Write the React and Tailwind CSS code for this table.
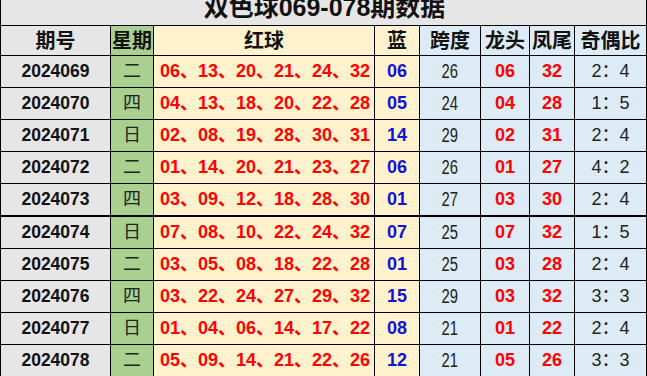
import React from 'react';

const rows = [
    { id: '2024069', wd: '二', red: '06、13、20、21、24、32', blue: '06', span: '26', head: '06', tail: '32', ratio: '2：4' },
    { id: '2024070', wd: '四', red: '04、13、18、20、22、28', blue: '05', span: '24', head: '04', tail: '28', ratio: '1：5' },
    { id: '2024071', wd: '日', red: '02、08、19、28、30、31', blue: '14', span: '29', head: '02', tail: '31', ratio: '2：4' },
    { id: '2024072', wd: '二', red: '01、14、20、21、23、27', blue: '06', span: '26', head: '01', tail: '27', ratio: '4：2' },
    { id: '2024073', wd: '四', red: '03、09、12、18、28、30', blue: '01', span: '27', head: '03', tail: '30', ratio: '2：4' },
    { id: '2024074', wd: '日', red: '07、08、10、22、24、32', blue: '07', span: '25', head: '07', tail: '32', ratio: '1：5' },
    { id: '2024075', wd: '二', red: '03、05、08、18、22、28', blue: '01', span: '25', head: '03', tail: '28', ratio: '2：4' },
    { id: '2024076', wd: '四', red: '03、22、24、27、29、32', blue: '15', span: '29', head: '03', tail: '32', ratio: '3：3' },
    { id: '2024077', wd: '日', red: '01、04、06、14、17、22', blue: '08', span: '21', head: '01', tail: '22', ratio: '2：4' },
    { id: '2024078', wd: '二', red: '05、09、14、21、22、26', blue: '12', span: '21', head: '05', tail: '26', ratio: '3：3' },
];

const font = { fontFamily: '"Liberation Sans", "Noto Sans CJK SC", sans-serif' };

const cell = 'flex items-center justify-center border-r border-black whitespace-nowrap overflow-hidden';

const App = () => {
    return (
        <div className="w-[647px] h-[376px] overflow-hidden bg-white" style={font}>
            {/* title */}
            <div className="h-[26px] border-l border-r border-b border-black bg-[#e7e6e6] overflow-hidden flex justify-center items-end">
                <span className="text-[25px] font-bold leading-[25px] text-[#111] mb-[5px] ml-[2px]">双色球069-078期数据</span>
            </div>

            <div className="grid grid-cols-[110px_43px_221px_45px_61px_49px_45px_72px] border-l border-black">
                {/* header */}
                <div className={`${cell} h-[30px] border-b bg-[#e7e6e6] text-[20px] font-bold text-[#111]`}>期号</div>
                <div className={`${cell} h-[30px] border-b bg-[#a9d08e] text-[20px] font-bold text-[#111]`}>星期</div>
                <div className={`${cell} h-[30px] border-b bg-[#fff2cc] text-[20px] font-bold text-[#111]`}>红球</div>
                <div className={`${cell} h-[30px] border-b bg-[#fff2cc] text-[20px] font-bold text-[#111]`}>蓝</div>
                <div className={`${cell} h-[30px] border-b bg-[#ddebf7] text-[20px] font-bold text-[#111]`}>跨度</div>
                <div className={`${cell} h-[30px] border-b bg-[#ddebf7] text-[20px] font-bold text-[#111]`}>龙头</div>
                <div className={`${cell} h-[30px] border-b bg-[#ddebf7] text-[20px] font-bold text-[#111]`}>凤尾</div>
                <div className={`${cell} h-[30px] border-b bg-[#ddebf7] text-[20px] font-bold text-[#111]`}>奇偶比</div>

                {rows.map((r, i) => {
                    const rowH = i === 4 ? 'h-[33px] border-b-2' : 'h-[32px] border-b';
                    return (
                        <React.Fragment key={r.id}>
                            <div className={`${cell} ${rowH} bg-[#e7e6e6] text-[17.5px] font-bold text-[#111]`}>{r.id}</div>
                            <div className={`${cell} ${rowH} bg-[#a9d08e] text-[18px] text-[#222]`}>{r.wd}</div>
                            <div className={`${cell} ${rowH} bg-[#fff2cc] text-[18px] font-bold text-[#f00] justify-start pl-[6px]`}>{r.red}</div>
                            <div className={`${cell} ${rowH} bg-[#fff2cc] text-[18px] font-bold text-[#1212d4]`}>{r.blue}</div>
                            <div className={`${cell} ${rowH} bg-[#ddebf7] text-[19.5px] text-[#222]`}>
                                <span className="inline-block scale-x-[0.76]">{r.span}</span>
                            </div>
                            <div className={`${cell} ${rowH} bg-[#ddebf7] text-[18px] font-bold text-[#f00]`}>{r.head}</div>
                            <div className={`${cell} ${rowH} bg-[#ddebf7] text-[18px] font-bold text-[#f00]`}>{r.tail}</div>
                            <div className={`${cell} ${rowH} bg-[#ddebf7] text-[18px] text-[#222]`}>{r.ratio}</div>
                        </React.Fragment>
                    );
                })}
            </div>
        </div>
    );
};

export default App;
